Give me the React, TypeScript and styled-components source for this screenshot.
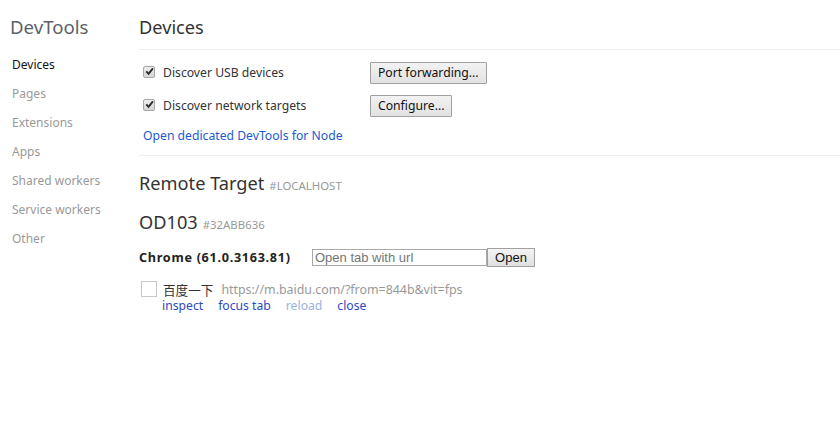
import React from "react";
import styled, { createGlobalStyle } from "styled-components";

const FONT = `"Noto Sans", "Open Sans", "Noto Sans CJK SC", sans-serif`;

const Global = createGlobalStyle`
  html, body { margin: 0; padding: 0; background: #fff; }
  body { font-family: ${FONT}; font-size: 12.2px; color: #303942; }
`;

const Page = styled.div`
  display: flex;
  width: 840px;
  height: 433px;
  overflow: hidden;
`;

const Sidebar = styled.nav`
  width: 139px;
  flex-shrink: 0;
  display: flex;
  flex-direction: column;
`;

const Brand = styled.h1`
  margin: 13px 0 0 10px;
  font-size: 18.6px;
  font-weight: 400;
  line-height: 28px;
  color: #5c6166;
`;

const NavList = styled.div`
  display: flex;
  flex-direction: column;
  margin-top: 9px;
  padding-left: 12px;
`;

const NavItem = styled.div<{ $active?: boolean }>`
  height: 29px;
  line-height: 29px;
  font-size: 12px;
  color: ${(p) => (p.$active ? "#111" : "#999")};
`;

const Main = styled.main`
  flex: 1;
  display: flex;
  flex-direction: column;
`;

const Title = styled.h2`
  margin: 13px 0 0 0;
  font-size: 18.2px;
  font-weight: 400;
  line-height: 28px;
  color: #333;
  padding-bottom: 8px;
  border-bottom: 1px solid #eee;
`;

const Section = styled.div`
  padding: 6px 0 10px 4px;
  border-bottom: 1px solid #eee;
  display: flex;
  flex-direction: column;
`;

const OptionRow = styled.div`
  display: flex;
  align-items: center;
  height: 33px;
`;

const CheckLabel = styled.label`
  display: flex;
  align-items: center;
  width: 227px;
  color: #333;
  font-size: 12.2px;
`;

const Check = styled.span`
  box-sizing: border-box;
  width: 12px;
  height: 12px;
  margin: -2px 8px 0 0;
  border: 1px solid #a8a8a8;
  border-radius: 2px;
  background: linear-gradient(#ececec, #d6d6d6);
  display: flex;
  align-items: center;
  justify-content: center;
  svg { display: block; }
`;

const Button = styled.button`
  font-family: ${FONT};
  font-size: 12.2px;
  color: #111;
  height: 22px;
  padding: 0 7px;
  border: 1px solid #a0a0a0;
  border-radius: 1px;
  background: linear-gradient(#f2f2f2, #e2e2e2);
`;

const Link = styled.a<{ $disabled?: boolean }>`
  color: ${(p) => (p.$disabled ? "#9ab2e0" : "#2d48c4")};
  text-decoration: none;
  font-size: 12.2px;
`;

const NodeLink = styled(Link)`
  margin-top: 5px;
  line-height: 18px;
  color: #1d5ad0;
`;

const Heading = styled.div`
  font-size: 18.2px;
  line-height: 27px;
  color: #333;
`;

const Sub = styled.span`
  font-size: 11.4px;
  line-height: 1;
  color: #999;
  margin-left: 5px;
`;

const RemoteHeading = styled(Heading)`
  margin-top: 14px;
`;

const DeviceHeading = styled(Heading)`
  margin-top: 12px;
`;

const BrowserRow = styled.div`
  display: flex;
  align-items: center;
  margin-top: 12px;
  height: 19px;
`;

const BrowserName = styled.span`
  font-weight: 700;
  font-size: 12.6px;
  letter-spacing: 0.72px;
  color: #222;
  width: 173px;
  white-space: nowrap;
`;

const UrlInput = styled.input`
  font-family: "Liberation Sans", Arial, sans-serif;
  font-size: 13px;
  width: 175px;
  height: 17px;
  box-sizing: border-box;
  padding: 0 2px;
  border: 1px solid #a9a9a9;
  color: #333;
  outline: none;
  &::placeholder { color: #757575; }
`;

const OpenButton = styled.button`
  font-family: "Liberation Sans", Arial, sans-serif;
  font-size: 13px;
  height: 19px;
  width: 48px;
  padding: 0;
  border: 1px solid #a0a0a0;
  background: linear-gradient(#f4f4f4, #e0e0e0);
  color: #111;
`;

const PageRow = styled.div`
  display: flex;
  align-items: center;
  margin-top: 13px;
  height: 18px;
  padding-left: 2px;
`;

const PageBox = styled.span`
  box-sizing: border-box;
  width: 16px;
  height: 16px;
  border: 1px solid #c8c8c8;
  margin-right: 6px;
`;

const PageTitle = styled.span`
  color: #333;
  font-size: 12.6px;
  margin-right: 8px;
`;

const PageUrl = styled.span`
  color: #999;
  font-size: 12.4px;
`;

const Actions = styled.div`
  display: flex;
  gap: 15px;
  padding-left: 23px;
  line-height: 16px;
`;

const Tick = () => (
  <svg width="9" height="9" viewBox="0 0 9 9">
    <path d="M1.3 4.4 L3.6 6.9 L7.9 1.3" stroke="#2b2b2b" strokeWidth="1.9" fill="none" />
  </svg>
);

export default function App() {
  const nav = ["Devices", "Pages", "Extensions", "Apps", "Shared workers", "Service workers", "Other"];
  return (
    <Page>
      <Global />
      <Sidebar>
        <Brand>DevTools</Brand>
        <NavList>
          {nav.map((n, i) => (
            <NavItem key={n} $active={i === 0}>{n}</NavItem>
          ))}
        </NavList>
      </Sidebar>
      <Main>
        <Title>Devices</Title>
        <Section>
          <OptionRow>
            <CheckLabel>
              <Check><Tick /></Check>
              Discover USB devices
            </CheckLabel>
            <Button>Port forwarding...</Button>
          </OptionRow>
          <OptionRow>
            <CheckLabel>
              <Check><Tick /></Check>
              Discover network targets
            </CheckLabel>
            <Button>Configure...</Button>
          </OptionRow>
          <NodeLink href="#">Open dedicated DevTools for Node</NodeLink>
        </Section>
        <RemoteHeading>
          Remote Target<Sub>#LOCALHOST</Sub>
        </RemoteHeading>
        <DeviceHeading>
          OD103<Sub>#32ABB636</Sub>
        </DeviceHeading>
        <BrowserRow>
          <BrowserName>Chrome (61.0.3163.81)</BrowserName>
          <UrlInput placeholder="Open tab with url" />
          <OpenButton>Open</OpenButton>
        </BrowserRow>
        <PageRow>
          <PageBox />
          <PageTitle>百度一下</PageTitle>
          <PageUrl>https://m.baidu.com/?from=844b&amp;vit=fps</PageUrl>
        </PageRow>
        <Actions>
          <Link href="#">inspect</Link>
          <Link href="#">focus tab</Link>
          <Link $disabled>reload</Link>
          <Link href="#">close</Link>
        </Actions>
      </Main>
    </Page>
  );
}
